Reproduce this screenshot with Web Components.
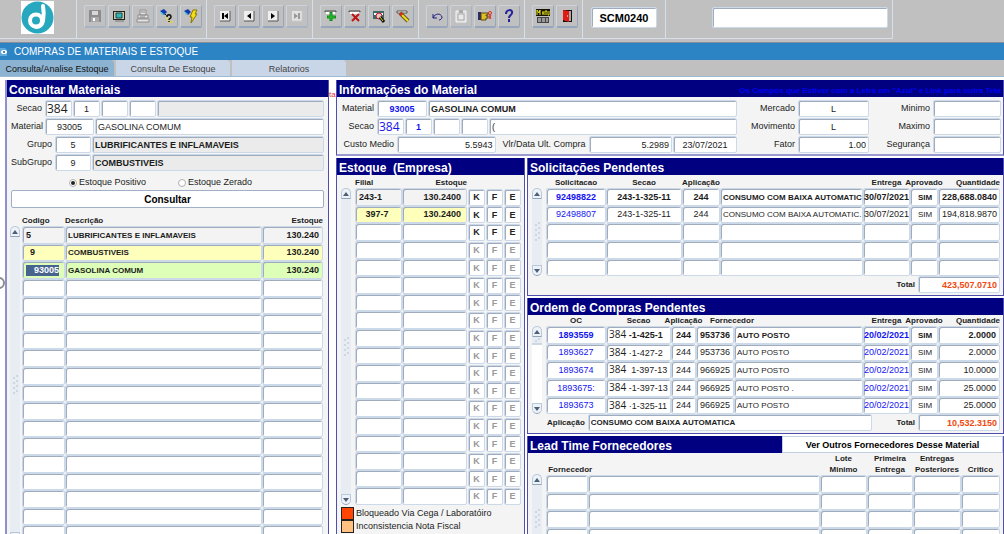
<!DOCTYPE html>
<html lang="pt-BR">
<head>
<meta charset="utf-8">
<title>Compras de Materiais e Estoque</title>
<style>
  html, body {
    margin: 0;
    height: 100%;
  }

  body {
    overflow: hidden;
    background: #ffffff;
    color: #1c1c1c;
    font-family: "Liberation Sans", Arial, sans-serif;
    font-size: 9px;
    line-height: 11px;
    --navy: #000080;
    --panel: #f4f4f4;
    --line: #a0acbd;
    --line-light: #cbd9e9;
    --link: #1414f0;
    --total: #f04a10;
  }
</style>
</head>
<body>
<stock-app></stock-app>

<script>
// shared rules for everything that looks like an input box
const boxStyles = `
  .box {
    box-sizing: border-box;
    border: 1px solid var(--line-light);
    border-radius: 2px;
    box-shadow: inset 1px 1px 0 var(--line);
    background-color: #ffffff;
  }
`;

const icons = {
  save: '<path d="M2 2h12v12H2z" fill="#8c8c8c"/><path d="M5 3h6v4H5z" fill="#d8d8d8"/><path d="M4 9h8v5H4z" fill="#aaa"/><path d="M6 10h2v3H6z" fill="#fff"/>',
  screen: '<path d="M2 3h12v9H2z" fill="#222"/><path d="M3 4h10v7H3z" fill="#c9c9a8"/><path d="M5 5h6v5H5z" fill="#35b5ad" stroke="#145" /><path d="M4 13h9" stroke="#777"/>',
  print: '<path d="M5 2h6v5H5zM3 7h10v3H3zM2 11h12v3H2z" fill="#e4e4e4" stroke="#8d8d8d"/><path d="M6 4h4M5 9h5" stroke="#888"/>',
  query: '<path d="M1 3l4-2 3 3-3 3z" fill="#1838b0"/><path d="M1 3l2 4 2-1z" fill="#42c9d8"/><path d="M6 6l2 2" stroke="#111"/><path d="M7 8l3 6h4" fill="none" stroke="#d8d070" stroke-width="2"/><path d="M8 9c0-3 4-3 4 0 0 2-2 1-2 3M10 13v1" fill="none" stroke="#111" stroke-width="1.500"/>',
  run: '<path d="M1 3l4-2 3 3-3 3z" fill="#1838b0"/><path d="M1 3l2 4 2-1z" fill="#42c9d8"/><path d="M10 2h4l-2 4h2l-6 9 1-6H7z" fill="#f2df18" stroke="#8b7500" stroke-width="1"/>',
  first: '<path d="M3 3h10v10H3z" fill="#eee"/><path d="M3 13h10V3" fill="none" stroke="#555"/><path d="M5 5h2v6H5zM11 5v6L7 8z" fill="#000"/>',
  prev: '<path d="M3 3h10v10H3z" fill="#eee"/><path d="M3 13h10V3" fill="none" stroke="#555"/><path d="M10 5v6L6 8z" fill="#000"/>',
  next: '<path d="M3 3h10v10H3z" fill="#eee"/><path d="M3 13h10V3" fill="none" stroke="#555"/><path d="M6 5v6l4-3z" fill="#000"/>',
  last: '<path d="M3 3h10v10H3z" fill="#e2e2e2"/><path d="M3 13h10V3" fill="none" stroke="#ccc"/><path d="M9 5h2v6H9zM5 5v6l4-3z" fill="#999"/>',
  add: '<path d="M2 4V3h11v1" fill="none" stroke="#444"/><path d="M3 4h9v2H3z" fill="#fff"/><path d="M8 4v9M4 9h9" stroke="#128a18" stroke-width="3"/><path d="M8 5v7M5 9h7" stroke="#27c62c"/>',
  remove: '<path d="M2 4V3h11v1" fill="none" stroke="#444"/><path d="M3 4h9v2H3z" fill="#fff"/><path d="M5 6l7 7M12 6l-7 7" stroke="#c01414" stroke-width="2"/>',
  lock: '<path d="M2 3h11v8H2z" fill="#3c6b66"/><path d="M3 5h9v2H3z" fill="#fff"/><circle cx="8" cy="8" r="3" fill="#e8c8c0" stroke="#d01030"/><path d="M9 9l4 5" stroke="#111" stroke-width="3"/><path d="M9 9l3 4" stroke="#e4d61c" stroke-width="1"/>',
  clear: '<path d="M2 3h10v2H2z" fill="#fff" stroke="#555"/><path d="M5 5l8 8" stroke="#6b5a10" stroke-width="4"/><path d="M7 7l6 6" stroke="#f0dc28" stroke-width="2"/><path d="M5 5l2 2" stroke="#e02a20" stroke-width="3"/>',
  undo: '<path d="M4 6v4h4M4 10c2-5 8-5 9-1 0 2-2 3-3 3" fill="none" stroke="#1c1c86" stroke-width="1"/>',
  paste: '<path d="M3 3h10v11H3z" fill="#d9d9d9" stroke="#f4f4f4"/><path d="M6 2h4v3H6z" fill="#aaa"/><path d="M5 6h6v6H5z" fill="#e9e9e9" stroke="#aaa"/>',
  hand: '<path d="M1 4h3v8H1z" fill="#2b2b66"/><path d="M4 5h7v2H9v1h2v2H9v2H4z" fill="#dcc02c" stroke="#5a4708"/><circle cx="13" cy="5" r="1.500" fill="none" stroke="#e02820"/><path d="M12 7l2 4M14 7l-2 4" stroke="#e02820"/>',
  help: '<path d="M5 6c0-5 7-5 6-1 0 2-3 2-3 5M8 11v3" fill="none" stroke="#22229a" stroke-width="2"/>',
  menu: '<path d="M1 1h14v7H1z" fill="#141400"/><path d="M2 7V2l2 3 1-3v5M8 3v4M7 5h2M10 7V3h2v4M14 3v4h-1" fill="none" stroke="#ece424"/><path d="M2 9h12v6H2z" fill="#444"/><path d="M3 11h10M3 13h10" stroke="#eee" stroke-dasharray="3 1"/>',
  exit: '<path d="M4 2h9v12H4z" fill="#111"/><path d="M6 3h6v10H6z" fill="#a8a8a8"/><path d="M4 2l6 1v11l-6-2z" fill="#e21a14"/><path d="M8 8h1" stroke="#fff"/>'
};

class ToolButton extends HTMLElement {
  connectedCallback() {
    this.attachShadow({ mode: 'open' });
    const disabled = this.hasAttribute('disabled') ? 'disabled' : '';
    this.shadowRoot.innerHTML = `
      <style>
        :host { display: block; }
        button {
          display: grid;
          place-items: center;
          width: 22px;
          height: 23px;
          padding: 0;
          border: 1px solid #ccd3dc;
          border-right-color: #96a6bd;
          border-bottom: 2px solid #96a6bd;
          border-radius: 2px;
          background: #c0c0c0;
        }
        button:disabled { border-color: #ccd3dc #a8b4c4 #a8b4c4 #ccd3dc; }
      </style>
      <button type="button" aria-label="${this.getAttribute('icon')}" ${disabled}>
        <svg width="16" height="16" viewBox="0 0 16 16">${icons[this.getAttribute('icon')]}</svg>
      </button>
    `;
  }
}

class AppToolbar extends HTMLElement {
  connectedCallback() {
    this.attachShadow({ mode: 'open' });
    const groups = [
      ['save', 'screen', 'print', 'query', 'run'],
      ['first', 'prev', 'next', 'last'],
      ['add', 'remove', 'lock', 'clear'],
      ['undo', 'paste', 'hand', 'help'],
      ['menu', 'exit']
    ];
    const off = ['save', 'print', 'last', 'paste'];

    this.shadowRoot.innerHTML = `
      <style>
        ${boxStyles}
        :host {
          display: flex;
          height: 42px;
          background: #c0c0c0;
          border-bottom: 1px solid #848e9c;
        }
        .group {
          box-sizing: border-box;
          display: flex;
          gap: 2px;
          height: 39px;
          padding: 5px 4px 0 7px;
          border-right: 1px solid #d6e0ec;
          border-bottom: 1px solid #d6e0ec;
        }
        .logo { padding: 1px 22px 0 21px; }
        .tela { padding: 5px 8px 0; }
        .screen { flex: 0 1 227px; padding-left: 46px; }
        input {
          height: 21px;
          margin-top: 2px;
          padding: 0 2px;
          font: inherit;
          min-width: 0;
        }
        .code {
          width: 66px;
          font-weight: bold;
          font-size: 11px;
          text-align: center;
        }
        .search { flex: 1; }
      </style>
      <div class="group logo">
        <svg width="33" height="33" viewBox="0 0 33 33" role="img" aria-label="Logo">
          <path d="M0 0h33v33H0z" fill="#fff"/>
          <circle cx="16.500" cy="16.500" r="16" fill="#27a8bf"/>
          <circle cx="15" cy="19.500" r="6" fill="none" stroke="#fff" stroke-width="4"/>
          <path d="M22 5c1 5 1 10 0 15-1 4-4 6-7 6" fill="none" stroke="#fff" stroke-width="4" stroke-linecap="round"/>
        </svg>
      </div>
      ${groups.map(g => `<div class="group">${g.map(i =>
        `<tool-button icon="${i}" ${off.includes(i) ? 'disabled' : ''}></tool-button>`).join('')}</div>`).join('')}
      <div class="group tela"><input class="box code" aria-label="Tela" value="SCM0240"></div>
      <div class="group screen"><input class="box search" aria-label="Mensagem"></div>
    `;
  }
}

class TitleBar extends HTMLElement {
  connectedCallback() {
    this.attachShadow({ mode: 'open' });
    this.shadowRoot.innerHTML = `
      <style>
        :host {
          display: flex;
          align-items: center;
          gap: 6px;
          height: 17px;
          background: #2c84c5;
          color: #ffffff;
          font-size: 10px;
        }
      </style>
      <svg width="8" height="10" viewBox="0 0 8 10">
        <path d="M0 1h5l2 2v6H0z" fill="#5fa9dc"/>
        <ellipse cx="4" cy="5" rx="3" ry="2" fill="#fff"/>
        <circle cx="4" cy="5" r="1" fill="#225a8c"/>
      </svg>
      <slot></slot>
    `;
  }
}

class TabStrip extends HTMLElement {
  connectedCallback() {
    this.attachShadow({ mode: 'open' });
    const tabs = ['Consulta/Analise Estoque', 'Consulta De Estoque', 'Relatorios'];
    this.shadowRoot.innerHTML = `
      <style>
        :host {
          display: flex;
          gap: 2px;
          height: 16px;
          background: #c0c0c0;
          border-bottom: 1px solid #9fbad2;
        }
        button {
          width: 114px;
          padding: 3px 0 0;
          border: 0;
          border-radius: 0 4px 0 0;
          background: #c9d6e8;
          color: #444444;
          font: inherit;
          white-space: nowrap;
        }
        button[aria-selected="true"] {
          background: #8db3d2;
          color: #111111;
        }
      </style>
      ${tabs.map((t, i) => `<button type="button" role="tab" aria-selected="${i === 0}">${t}</button>`).join('')}
    `;
  }
}

class FormPanel extends HTMLElement {
  connectedCallback() {
    this.attachShadow({ mode: 'open' });
    this.shadowRoot.innerHTML = `
      <style>
        :host {
          box-sizing: border-box;
          display: flex;
          flex-direction: column;
          min-width: 0;
          background: var(--panel);
          border: solid #5050ac;
          border-width: 0 1px 1px;
        }
        header {
          display: flex;
          justify-content: space-between;
          align-items: stretch;
          height: 17px;
          background: var(--navy);
        }
        h2 {
          margin: 0;
          padding: 3px 0 0 2px;
          color: #ffffff;
          font-size: 12px;
          line-height: 14px;
          white-space: pre;
        }
      </style>
      <header><h2>${this.getAttribute('heading')}</h2><slot name="extra"></slot></header>
      <slot></slot>
    `;
  }
}

// label + input; without a visible label the name goes to aria-label
class FieldBox extends HTMLElement {
  connectedCallback() {
    this.attachShadow({ mode: 'open' });
    const label = this.getAttribute('label');
    const value = this.getAttribute('value') || '';
    this.shadowRoot.innerHTML = `
      <style>
        ${boxStyles}
        :host { display: flex; align-items: center; min-width: 0; }
        label {
          flex: var(--label-flex, none);
          width: var(--label-width, auto);
          padding-right: 3px;
          box-sizing: border-box;
          text-align: right;
          white-space: nowrap;
        }
        input {
          flex: var(--input-flex, 1);
          width: var(--input-width, 100%);
          min-width: 0;
          height: 17px;
          padding: 0 2px;
          font: inherit;
          color: inherit;
          text-align: ${this.getAttribute('align') || 'left'};
        }
        :host([readonly]) input { background-color: #ebebeb; }
        :host([strong]) input { font-weight: bold; }
        :host([strong-label]) label { font-weight: bold; font-size: 8px; }
        :host([link]) input { color: var(--link); }
        :host([total]) input { color: var(--total); font-weight: bold; }
        :host([big]) input { font-family: "Open Sans", "Noto Sans", sans-serif; font-size: 12px; padding: 0 1px; }
        :host([small]) input { font-size: 8px; }
      </style>
      ${label ? `<label for="f">${label}</label>` : ''}
      <input id="f" class="box" value="${value}" ${label ? '' : `aria-label="${this.getAttribute('name') || 'campo'}"`}>
    `;
  }
}

class ScrollStrip extends HTMLElement {
  connectedCallback() {
    this.attachShadow({ mode: 'open' });
    this.shadowRoot.innerHTML = `
      <style>
        :host {
          display: flex;
          flex-direction: column;
          justify-content: space-between;
          width: 10px;
          background: #e8edf4;
          border-radius: 5px;
        }
        button {
          display: grid;
          place-items: center;
          width: 10px;
          height: 11px;
          padding: 0;
          border: 1px solid #b9c9dc;
          border-bottom-color: #8fa3b9;
          border-radius: 5px 5px 1px 1px;
          background: #edf2f8;
        }
        button.down { border-radius: 1px 1px 5px 5px; }
        :host([short]) { background: linear-gradient(#e8edf4 19px, #ffffff 19px); }
        :host([short]) .grip { align-self: flex-start; flex: 1; }
      </style>
      <button type="button" aria-label="Subir"><svg width="6" height="4" viewBox="0 0 6 4"><path d="M0 4l3-4 3 4z" fill="#4d5f78"/></svg></button>
      <svg class="grip" width="10" height="22" viewBox="0 0 10 22">
        <path d="M6 2h2M3 4h2M6 7h2M3 9h2M6 12h2M3 14h2M6 17h2M3 19h2" stroke="#b3c1d1" stroke-width="1"/>
      </svg>
      <button type="button" class="down" aria-label="Descer"><svg width="6" height="4" viewBox="0 0 6 4"><path d="M0 0l3 4 3-4z" fill="#4d5f78"/></svg></button>
    `;
    if (this.hasAttribute('short')) {
      const grip = this.shadowRoot.querySelector('.grip');
      grip.setAttribute('viewBox', '0 0 10 8');
      grip.setAttribute('preserveAspectRatio', 'xMidYMin meet');
      grip.querySelector('path').setAttribute('d', 'M6 2h2M3 4h2M0 7h10');
    }
  }
}

const oldOc = t => `<span class="code">384</span>${t}`;
const link = t => `<a href="#">${t}</a>`;

// columns: w (px, none = takes the rest), head, headSpan, align, cls
const grids = {
  materials: {
    rows: 18,
    headHeight: 13,
    columns: [
      { w: 43, head: 'Codigo', headAlign: 'left' },
      { head: 'Descrição', headAlign: 'left', cls: 'text' },
      { w: 61, head: 'Estoque', headAlign: 'right', align: 'right' }
    ],
    classes: ['strong grey', 'strong yellow', 'strong green'],
    data: [
      ['5', 'LUBRIFICANTES E INFLAMAVEIS', '130.240'],
      ['<span class="in">9</span>', 'COMBUSTIVEIS', '130.240'],
      ['<mark>93005</mark>', 'GASOLINA COMUM', '130.240']
    ]
  },
  stock: {
    rows: 18,
    headHeight: 13,
    columns: [
      { w: 47, head: 'Filial', headAlign: 'left' },
      { head: 'Estoque', headAlign: 'right', align: 'right', cls: 'inset' },
      { w: 18, button: 'K' },
      { w: 18, button: 'F' },
      { w: 18, button: 'E' }
    ],
    classes: ['strong grey', 'strong yellow'],
    data: [
      ['243-1', '130.2400'],
      ['<span class="in">&nbsp;397-7</span>', '130.2400']
    ]
  },
  requests: {
    rows: 5,
    headHeight: 13,
    columns: [
      { w: 60, head: 'Solicitacao', align: 'center' },
      { w: 76, head: 'Secao', align: 'center' },
      { w: 38, head: 'Aplicação', align: 'center' },
      { head: '', cls: 'text' },
      { w: 47, head: 'Entrega', cls: 'date' },
      { w: 28, head: 'Aprovado', align: 'center', cls: 'text' },
      { w: 62, head: 'Quantidade', headAlign: 'right', align: 'right' }
    ],
    classes: ['strong'],
    data: [
      [link('92498822'), '243-1-325-11', '244', 'CONSUMO COM BAIXA AUTOMATIC', '30/07/2021', 'SIM', '228,688.0840'],
      [link('92498807'), '243-1-325-11', '244', 'CONSUMO COM BAIXA AUTOMATIC.', '30/07/2021', 'SIM', '194,818.9870']
    ]
  },
  orders: {
    rows: 5,
    headHeight: 11,
    columns: [
      { w: 60, head: 'OC', align: 'center' },
      { w: 65, head: 'Secao', align: 'left', cls: 'tight' },
      { w: 25, head: 'Aplicação', align: 'center' },
      { w: 38, head: 'Fornecedor', headSpan: 2, headAlign: 'left', align: 'center' },
      { cls: 'text' },
      { w: 47, head: 'Entrega', cls: 'date' },
      { w: 28, head: 'Aprovado', align: 'center', cls: 'text' },
      { w: 62, head: 'Quantidade', headAlign: 'right', align: 'right' }
    ],
    classes: ['strong'],
    data: [
      [link('1893559'), oldOc(' -1-425-1'), '244', '953736', 'AUTO POSTO', link('20/02/2021'), 'SIM', '2.0000'],
      [link('1893627'), oldOc(' ·1-427-2'), '244', '953736', 'AUTO POSTO', link('20/02/2021'), 'SIM', '2.0000'],
      [link('1893674'), oldOc('&nbsp; 1-397-13'), '244', '966925', 'AUTO POSTO', link('20/02/2021'), 'SIM', '10.0000'],
      [link('1893675:'), oldOc(' -1-397-13'), '244', '966925', 'AUTO POSTO .', link('20/02/2021'), 'SIM', '25.0000'],
      [link('1893673'), oldOc(' ·1-325-11'), '244', '966925', 'AUTO POSTO', link('20/02/2021'), 'SIM', '25.0000']
    ]
  },
  leadTime: {
    rows: 5,
    headHeight: 21,
    columns: [
      { w: 42, head: '&nbsp;Fornecedor', headAlign: 'left' },
      { head: '' },
      { w: 47, head: 'Lote<br>Minimo' },
      { w: 46, head: 'Primeira<br>Entrega' },
      { w: 48, head: 'Entregas<br>Posteriores' },
      { w: 39, head: 'Critico' }
    ],
    classes: [],
    data: []
  }
};

class DataGrid extends HTMLElement {
  connectedCallback() {
    this.attachShadow({ mode: 'open' });
    this.render();
  }

  cell(col, r, c, grid) {
    if (col.button) {
      return `<td class="act"><button type="button" class="box" ${r > 2 ? 'disabled' : ''}>${col.button}</button></td>`;
    }
    const value = (grid.data[r] || [])[c] || '';
    return `<td class="box ${col.cls || ''}" style="text-align: ${col.align || 'left'}">${value}</td>`;
  }

  head(col, c, columns) {
    // already covered by the header before it
    if (c > 0 && columns[c - 1].headSpan) return '';
    const flexAlign = { left: 'flex-start', right: 'flex-end', center: 'center' };
    return `<th colspan="${col.headSpan || 1}" class="${col.headSpan ? 'span' : ''}">
      <span style="justify-content: ${flexAlign[col.headAlign || 'center']}">${col.head || ''}</span></th>`;
  }

  render() {
    const grid = grids[this.getAttribute('grid')];

    let body = '';
    for (let r = 0; r < grid.rows; r++) {
      body += `<tr class="${grid.classes[r] || ''}">${grid.columns.map((col, c) => this.cell(col, r, c, grid)).join('')}</tr>`;
    }

    this.shadowRoot.innerHTML = `
      <style>
        ${boxStyles}
        :host { display: block; min-width: 0; }
        table {
          width: 100%;
          table-layout: fixed;
          border-collapse: separate;
          border-spacing: 0;
        }
        th {
          height: ${grid.headHeight}px;
          padding: 0;
          vertical-align: bottom;
          font-size: 8px;
          line-height: 11px;
        }
        th span {
          display: flex;
          white-space: nowrap;
          text-align: center;
        }
        th.span { padding-left: 14px; }
        tbody tr { height: 18px; }
        tbody tr:nth-child(5n+2), tbody tr:nth-child(5n+5) { height: 17px; }
        td {
          padding: 0 3px;
          overflow: hidden;
          white-space: nowrap;
          line-height: 11px;
          background-clip: padding-box;
        }
        .text { font-size: 8px; padding: 0 0 0 2px; }
        .tight { padding: 0 0 0 2px; }
        .date { padding: 0; }
        .inset { padding-right: 5px; }
        .in { padding-left: 4px; }
        .strong { font-weight: bold; }
        .grey td.box { background-color: #f3f3f3; }
        .yellow td.box { background-color: #ffffbc; }
        .green td.box { background-color: #ddffb8; }
        a { color: var(--link); text-decoration: none; }
        mark {
          display: inline-block;
          padding-left: 8px;
          background: #47648f;
          color: #ffffff;
        }
        .code {
          font-family: "Open Sans", "Noto Sans", sans-serif;
          font-size: 10px;
          font-weight: normal;
        }
        td.act { padding: 0 0 0 1px; }
        td button {
          display: block;
          width: 100%;
          height: 17px;
          padding: 0;
          font: bold 9px "Liberation Sans", Arial, sans-serif;
          color: #222222;
        }
        td button:disabled { color: #999999; }
      </style>
      <table>
        <colgroup>${grid.columns.map(c => `<col ${c.w ? `style="width: ${c.w}px"` : ''}>`).join('')}</colgroup>
        <thead><tr>${grid.columns.map((c, i) => this.head(c, i, grid.columns)).join('')}</tr></thead>
        <tbody>${body}</tbody>
      </table>
    `;
  }
}

class StockApp extends HTMLElement {
  connectedCallback() {
    this.attachShadow({ mode: 'open' });
    this.shadowRoot.innerHTML = `
      <style>
        ${boxStyles}
        :host {
          display: flex;
          flex-direction: column;
          height: 100vh;
          overflow: hidden;
        }
        main {
          flex: 1;
          min-height: 0;
          display: grid;
          grid-template-columns: minmax(0, 324fr) 7px minmax(0, 668fr);
          padding: 3px 0 0 5px;
        }
        .stray { padding-top: 9px; font-size: 8px; color: #e03030; }
        .right { display: flex; flex-direction: column; gap: 2px; min-width: 0; }
        .lower {
          flex: 1;
          display: grid;
          grid-template-columns: minmax(0, 189fr) minmax(0, 477fr);
          gap: 2px;
        }
        .stack { display: flex; flex-direction: column; gap: 2px; min-width: 0; }
        .grow { flex: 1; }
        .search { border-left: 2px solid #9090cc; }
        .rows { display: flex; flex-direction: column; gap: 1px; padding: 3px 4px 2px 4px; }
        .row { display: flex; gap: 1px; }
        .rest { flex: 1; }
        .w27 { width: 27px; }
        .first { --input-flex: none; --input-width: 27px; --label-width: 34px; }
        .radios { display: flex; justify-content: center; gap: 32px; padding: 4px 14px 2px 0; }
        .radios label { display: flex; align-items: center; gap: 2px; }
        .radios input { appearance: none; box-sizing: border-box; width: 8px; height: 8px; margin: 0; border: 1px solid #b0b0b0; border-radius: 50%; background: #ffffff; }
        .radios input:checked { border: 2px solid #ffffff; outline: 1px solid #b0b0b0; outline-offset: -1px; background: #222222; }
        .wide {
          margin: 0 4px;
          height: 18px;
          padding: 0;
          border-color: #9fb0c6;
          box-shadow: none;
          font: bold 10px "Liberation Sans", Arial, sans-serif;
        }
        .listing { display: flex; gap: 4px; padding: 0 3px 0 4px; }
        .listing data-grid { flex: 1; }
        .listing scroll-strip { margin-top: var(--top, 13px); }
        .search .listing { padding: 5px 5px 0 3px; gap: 2px; }
        .stock { padding-bottom: 2px; }
        .info { border-bottom: 2px solid #9a9ad0; }
        .info .rows { padding: 3px 2px 1px 2px; }
        .hint { padding: 5px 2px 0 0; color: #0000f0; font-size: 8px; font-weight: bold; white-space: nowrap; }
        .mid { width: 131px; --label-flex: 1; --input-flex: none; --input-width: 71px; }
        .end { width: 131px; --label-flex: 1; --input-flex: none; --input-width: 68px; }
        .info .first { --label-width: 38px; }
        .cost { flex: 158; --label-width: 58px; }
        .last { flex: 177; --label-width: 92px; }
        .legend { display: flex; align-items: center; gap: 2px; padding-left: 4px; height: 13px; }
        .legend i { box-sizing: border-box; width: 13px; height: 13px; border: 1px solid #222222; }
        .sum { display: flex; justify-content: flex-end; gap: 47px; padding: 0 3px 2px 19px; }
        .sum .total { --input-flex: none; --input-width: 82px; }
        .more {
          box-sizing: border-box;
          width: 221px;
          padding: 0;
          border: 1px solid #c3d0e0;
          background: #ffffff;
          font: bold 9px "Liberation Sans", Arial, sans-serif;
        }
        /* floating handle on the window's left edge */
        .handle {
          position: absolute;
          left: -7px;
          top: 277px;
          box-sizing: border-box;
          width: 12px;
          height: 12px;
          border: 2px solid #8c8c8c;
          border-radius: 50%;
        }
      </style>

      <app-toolbar></app-toolbar>
      <title-bar>COMPRAS DE MATERIAIS E ESTOQUE</title-bar>
      <tab-strip role="tablist"></tab-strip>

      <main>
        <form-panel class="search" heading="Consultar Materiais">
          <div class="rows">
            <div class="row">
              <field-box class="first" label="Secao" value="384" big></field-box>
              <field-box class="w27" name="Secao 2" value="1" align="center"></field-box>
              <field-box class="w27" name="Secao 3"></field-box>
              <field-box class="w27" name="Secao 4"></field-box>
              <field-box class="rest" name="Nome da secao" readonly></field-box>
            </div>
            <div class="row">
              <field-box class="first" style="--input-width: 49px" label="Material" value="93005" align="center"></field-box>
              <field-box class="rest" name="Nome do material" value="GASOLINA COMUM"></field-box>
            </div>
            <div class="row">
              <field-box class="first" style="--label-width: 44px; --input-width: 36px" label="Grupo" value="5" align="center"></field-box>
              <field-box class="rest" name="Nome do grupo" value="LUBRIFICANTES E INFLAMAVEIS" strong readonly></field-box>
            </div>
            <div class="row">
              <field-box class="first" style="--label-width: 44px; --input-width: 36px" label="SubGrupo" value="9" align="center"></field-box>
              <field-box class="rest" name="Nome do subgrupo" value="COMBUSTIVEIS" strong readonly></field-box>
            </div>
          </div>
          <div class="radios">
            <label><input type="radio" name="saldo" checked>Estoque Positivo</label>
            <label><input type="radio" name="saldo">Estoque Zerado</label>
          </div>
          <button type="button" class="box wide">Consultar</button>
          <div class="listing">
            <scroll-strip></scroll-strip>
            <data-grid grid="materials"></data-grid>
          </div>
        </form-panel>

        <div class="stray">ta</div>

        <div class="right">
          <form-panel class="info" heading="Informações do Material">
            <span slot="extra" class="hint">Os Campos que Estiver com a Letra em "Azul" é Link para outra Tela</span>
            <div class="rows">
              <div class="row">
                <field-box class="first" style="--input-width: 50px" label="Material" value="93005" align="center" link strong></field-box>
                <field-box class="rest" name="Nome do material" value="GASOLINA COMUM" strong></field-box>
                <field-box class="mid" label="Mercado" value="L" align="center"></field-box>
                <field-box class="end" label="Minimo"></field-box>
              </div>
              <div class="row">
                <field-box class="first" label="Secao" value="384" big link></field-box>
                <field-box class="w27" name="Secao 2" value="1" align="center" link strong></field-box>
                <field-box class="w27" name="Secao 3"></field-box>
                <field-box class="w27" name="Secao 4"></field-box>
                <field-box class="rest" name="Nome da secao" value="("></field-box>
                <field-box class="mid" label="Movimento" value="L" align="center"></field-box>
                <field-box class="end" label="Maximo"></field-box>
              </div>
              <div class="row">
                <field-box class="cost" label="Custo Medio" value="5.5943" align="right"></field-box>
                <field-box class="last" label="Vlr/Data Ult. Compra" value="5.2989" align="right"></field-box>
                <field-box style="width: 64px" name="Data" value="23/07/2021" align="center"></field-box>
                <field-box class="mid" label="Fator" value="1.00" align="right"></field-box>
                <field-box class="end" label="Segurança"></field-box>
              </div>
            </div>
          </form-panel>

          <div class="lower">
            <form-panel heading="Estoque  (Empresa)">
              <div class="listing stock">
                <scroll-strip></scroll-strip>
                <data-grid grid="stock"></data-grid>
              </div>
              <div class="legend"><i style="background: #ff4500"></i>Bloqueado Via Cega / Laboratóiro</div>
              <div class="legend"><i style="background: #ffc080"></i>Inconsistencia Nota Fiscal</div>
            </form-panel>

            <div class="stack">
              <form-panel heading="Solicitações Pendentes">
                <div class="listing">
                  <scroll-strip></scroll-strip>
                  <data-grid grid="requests"></data-grid>
                </div>
                <div class="sum">
                  <field-box class="total" label="Total" value="423,507.0710" align="right" strong-label total></field-box>
                </div>
              </form-panel>

              <form-panel heading="Ordem de Compras Pendentes">
                <div class="listing" style="--top: 11px">
                  <scroll-strip short></scroll-strip>
                  <data-grid grid="orders"></data-grid>
                </div>
                <div class="sum" style="gap: 24px">
                  <field-box class="rest" label="Aplicação" value="CONSUMO COM BAIXA AUTOMATICA" strong small strong-label></field-box>
                  <field-box class="total" label="Total" value="10,532.3150" align="right" strong-label total></field-box>
                </div>
              </form-panel>

              <form-panel class="grow" heading="Lead Time Fornecedores">
                <button type="button" slot="extra" class="more">Ver Outros Fornecedores Desse Material</button>
                <div class="listing" style="--top: 21px">
                  <scroll-strip></scroll-strip>
                  <data-grid grid="leadTime"></data-grid>
                </div>
              </form-panel>
            </div>
          </div>
        </div>
      </main>
      <div class="handle"></div>
    `;
  }
}

customElements.define('tool-button', ToolButton);
customElements.define('app-toolbar', AppToolbar);
customElements.define('title-bar', TitleBar);
customElements.define('tab-strip', TabStrip);
customElements.define('form-panel', FormPanel);
customElements.define('field-box', FieldBox);
customElements.define('scroll-strip', ScrollStrip);
customElements.define('data-grid', DataGrid);
customElements.define('stock-app', StockApp);
</script>
</body>
</html>
